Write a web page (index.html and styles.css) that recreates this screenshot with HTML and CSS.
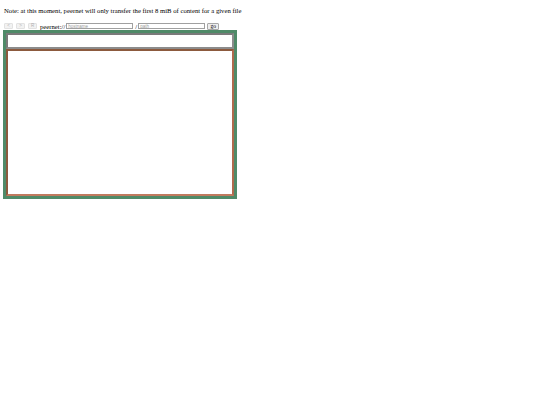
FILE: index.html
```html
<!DOCTYPE html>
<html>
<head>
<meta charset="utf-8">
<title>peernet</title>
<link rel="stylesheet" href="styles.css">
</head>
<body>
<p class="note">Note: at this moment, peernet will only transfer the first 8 miB of content for a given file</p>
<div class="toolbar">
  <button class="nav" disabled>&lt;</button>
  <button class="nav" disabled>&gt;</button>
  <button class="nav" disabled>R</button>
  <span class="scheme">peernet://</span>
  <input class="field host" type="text" placeholder="hostname">
  <span class="slash">/</span>
  <input class="field path" type="text" placeholder="path">
  <button class="go">go</button>
</div>
<div class="frame">
  <div class="status"></div>
  <div class="content"></div>
</div>
</body>
</html>
```
FILE: styles.css
```css
html, body {
  background: #ffffff;
}
body {
  margin: 3px;
  font-family: "Liberation Serif", "Times New Roman", serif;
  font-size: 6.7px;
  color: #000000;
}
.note {
  margin: 4px 0 8px 1px;
  line-height: 7px;
}
.toolbar {
  display: flex;
  align-items: center;
  height: 8px;
  margin: 0 0 0 1px;
}
.nav {
  width: 9px;
  height: 6px;
  margin: 0 3px 0 0;
  padding: 0;
  border: 1px solid #e2e2e2;
  background: #f2f2f2;
  color: #b0b0b0;
  font-family: "Liberation Sans", Arial, sans-serif;
  font-size: 4.5px;
  line-height: 4px;
  border-radius: 1px;
}
.scheme {
  line-height: 7px;
}
.field {
  height: 6px;
  box-sizing: border-box;
  border: 1px solid #a0a0a0;
  padding: 0 1px;
  margin: 0;
  font-family: "Liberation Sans", Arial, sans-serif;
  font-size: 4.5px;
  line-height: 4px;
}
.field::placeholder {
  color: #9a9a9a;
}
.host {
  width: 67px;
  margin-left: 1px;
}
.slash {
  margin: 0 1px 0 2px;
  line-height: 7px;
}
.path {
  width: 67px;
}
.go {
  width: 12px;
  height: 7px;
  margin-left: 2px;
  padding: 0;
  border: 1px solid #a8a8a8;
  background: #eeeeee;
  font-family: "Liberation Serif", serif;
  font-size: 5.5px;
  line-height: 5px;
  border-radius: 1px;
  color: #000;
}
.frame {
  width: 228px;
  height: 163px;
  margin-top: 0;
  border: 3px solid #4f8a68;
  display: flex;
  flex-direction: column;
  background: #ffffff;
}
.status {
  height: 12px;
  border: 2px solid #8c8c8c;
  border-top-color: #7a7a7a;
  border-left-color: #7a7a7a;
  background: #ffffff;
}
.content {
  flex: 1;
  border: 2px solid #8c5a3e;
  border-right-color: #b06a4e;
  border-bottom-color: #c07a5e;
  background: #ffffff;
}
```
